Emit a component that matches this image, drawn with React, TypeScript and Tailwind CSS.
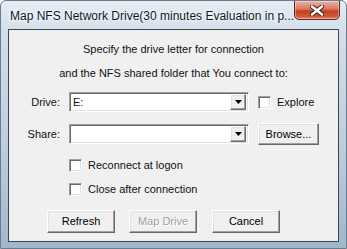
import React, { FC } from 'react'

const raised =
  'border border-t-white border-l-white border-r-[#696969] border-b-[#696969] shadow-[inset_-1px_-1px_0_#a0a0a0,inset_1px_1px_0_#e3e3e3]'
const sunken =
  'border border-t-[#a0a0a0] border-l-[#a0a0a0] border-r-white border-b-white shadow-[inset_1px_1px_0_#696969,inset_-1px_-1px_0_#e3e3e3]'

const Button: FC<{ label: string; disabled?: boolean; className?: string }> = (props) => (
  <div
    className={`flex items-center justify-center bg-[#f0f0f0] ${raised} ${props.className ?? ''} ${
      props.disabled ? 'text-[#a0a0a0] [text-shadow:1px_1px_0_#fff]' : 'text-black'
    }`}
  >
    {props.label}
  </div>
)

const Combo: FC<{ value?: string }> = (props) => (
  <div className={`flex h-[20px] w-[180px] items-center bg-white pl-[3px] pr-[2px] ${sunken}`}>
    <div className="flex-1 leading-none">{props.value}</div>
    <div className={`flex h-[16px] w-[16px] items-center justify-center bg-[#f0f0f0] ${raised}`}>
      <svg width="7" height="4" viewBox="0 0 7 4">
        <polygon points="0,0 7,0 3.5,4" fill="#000" />
      </svg>
    </div>
  </div>
)

const Check: FC<{ label: string }> = (props) => (
  <div className="flex items-center h-[13px]">
    <div className={`h-[13px] w-[13px] bg-white ${sunken}`} />
    <span className="ml-[6px]">{props.label}</span>
  </div>
)

const App: FC = () => {
  return (
    <div
      className="flex flex-col w-[347px] h-[249px] overflow-hidden rounded-t-[6px] border border-[#6b7c8c] bg-[linear-gradient(180deg,#e6edf4_0%,#d3dfea_12%,#bccddd_60%,#9fb7cc_100%)] text-[11px]"
      style={{ fontFamily: '"Liberation Sans", Arial, sans-serif' }}
    >
      <div className="flex h-[28px] shrink-0 items-start">
        <div className="flex-1 pl-[9px] pt-[6px] text-[12px] text-[#0b1a2a] [text-shadow:0_0_6px_#fff,0_0_3px_#fff] whitespace-nowrap">
          Map NFS Network Drive(30 minutes Evaluation in p...
        </div>
        <div className="mr-[6px] mt-[-1px] flex h-[20px] w-[47px] items-center justify-center rounded-b-[5px] border border-[#5a2a22] bg-[linear-gradient(180deg,#eab3a6_0%,#d9765f_45%,#c3401f_55%,#d1553a_85%,#e8876d_100%)] shadow-[inset_0_0_0_1px_rgba(255,255,255,0.35)]">
          <svg width="14" height="11" viewBox="0 0 14 11">
            <path d="M2 1.5 L12 9.5 M12 1.5 L2 9.5" stroke="#3a1a14" strokeWidth="4.4" strokeLinecap="round" />
            <path d="M2 1.5 L12 9.5 M12 1.5 L2 9.5" stroke="#fff" strokeWidth="2.6" strokeLinecap="round" />
          </svg>
        </div>
      </div>

      <div className="mx-[7px] mb-[6px] flex flex-1 flex-col border border-[#3b4753] bg-[#f0f0f0] text-[#111]">
        <div className="mt-[13px] h-[13px] text-center leading-[13px]">Specify the drive letter for connection</div>
        <div className="mt-[11px] h-[13px] text-center leading-[13px]">and the NFS shared folder that You connect to:</div>

        <div className="mt-[12px] flex items-center">
          <div className="w-[51px] text-right">Drive:</div>
          <div className="ml-[9px]">
            <Combo value="E:" />
          </div>
          <div className="ml-[9px]">
            <Check label="Explore" />
          </div>
        </div>

        <div className="mt-[11px] flex items-center">
          <div className="w-[51px] text-right">Share:</div>
          <div className="ml-[9px]">
            <Combo />
          </div>
          <Button label="Browse..." className="ml-[9px] h-[22px] w-[61px]" />
        </div>

        <div className="mt-[14px] pl-[60px]">
          <Check label="Reconnect at logon" />
        </div>
        <div className="mt-[11px] pl-[60px]">
          <Check label="Close after connection" />
        </div>

        <div className="mt-[14px] flex pl-[38px]">
          <Button label="Refresh" className="h-[23px] w-[68px]" />
          <Button label="Map Drive" disabled className="ml-[14px] h-[23px] w-[68px]" />
          <Button label="Cancel" className="ml-[15px] h-[23px] w-[68px]" />
        </div>
      </div>
    </div>
  )
}

export default App
